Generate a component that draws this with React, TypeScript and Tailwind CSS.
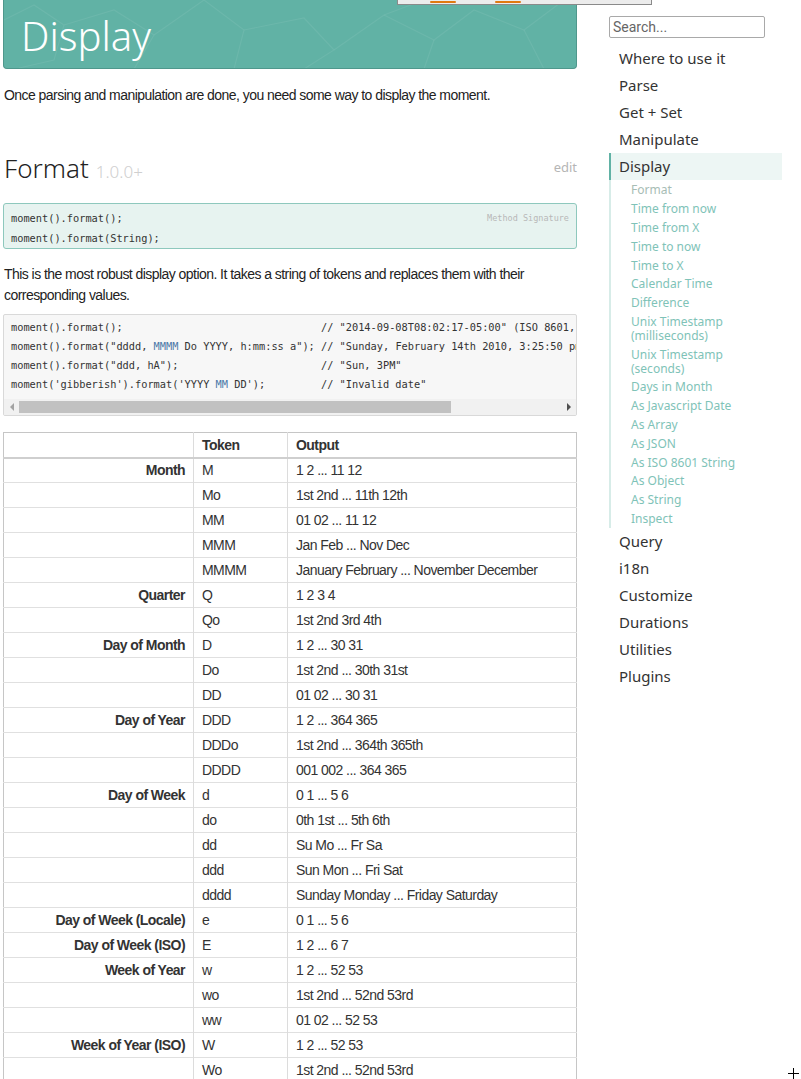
import React from "react";

const heading = { fontFamily: '"Noto Sans", "DejaVu Sans", sans-serif' };
const body = { fontFamily: '"Liberation Sans", Arial, sans-serif', letterSpacing: "-0.55px" };
const search = { fontFamily: 'Roboto, "Liberation Sans", Arial, sans-serif' };
const mono = { fontFamily: '"DejaVu Sans Mono", "Liberation Mono", monospace' };

type Row = [string, string, string];
const rows: Row[] = [
  ["Month", "M", "1 2 ... 11 12"],
  ["", "Mo", "1st 2nd ... 11th 12th"],
  ["", "MM", "01 02 ... 11 12"],
  ["", "MMM", "Jan Feb ... Nov Dec"],
  ["", "MMMM", "January February ... November December"],
  ["Quarter", "Q", "1 2 3 4"],
  ["", "Qo", "1st 2nd 3rd 4th"],
  ["Day of Month", "D", "1 2 ... 30 31"],
  ["", "Do", "1st 2nd ... 30th 31st"],
  ["", "DD", "01 02 ... 30 31"],
  ["Day of Year", "DDD", "1 2 ... 364 365"],
  ["", "DDDo", "1st 2nd ... 364th 365th"],
  ["", "DDDD", "001 002 ... 364 365"],
  ["Day of Week", "d", "0 1 ... 5 6"],
  ["", "do", "0th 1st ... 5th 6th"],
  ["", "dd", "Su Mo ... Fr Sa"],
  ["", "ddd", "Sun Mon ... Fri Sat"],
  ["", "dddd", "Sunday Monday ... Friday Saturday"],
  ["Day of Week (Locale)", "e", "0 1 ... 5 6"],
  ["Day of Week (ISO)", "E", "1 2 ... 6 7"],
  ["Week of Year", "w", "1 2 ... 52 53"],
  ["", "wo", "1st 2nd ... 52nd 53rd"],
  ["", "ww", "01 02 ... 52 53"],
  ["Week of Year (ISO)", "W", "1 2 ... 52 53"],
  ["", "Wo", "1st 2nd ... 52nd 53rd"],
  ["", "WW", "01 02 ... 52 53"],
  ["Year", "YY", "70 71 ... 29 30"],
];

const mainNav1 = ["Where to use it", "Parse", "Get + Set", "Manipulate"];
const subNav = [
  "Format",
  "Time from now",
  "Time from X",
  "Time to now",
  "Time to X",
  "Calendar Time",
  "Difference",
  "Unix Timestamp (milliseconds)",
  "Unix Timestamp (seconds)",
  "Days in Month",
  "As Javascript Date",
  "As Array",
  "As JSON",
  "As ISO 8601 String",
  "As Object",
  "As String",
  "Inspect",
];
const mainNav2 = ["Query", "i18n", "Customize", "Durations", "Utilities", "Plugins"];

function Banner() {
  return (
    <div className="relative h-[69px] bg-[#61b2a5] border-x border-b border-[#4f978c] rounded-b-[4px] overflow-hidden">
      <svg className="absolute inset-0" width="574" height="69" viewBox="0 0 574 69">
        <g fill="none" stroke="#ffffff" strokeOpacity="0.07" strokeWidth="1.2">
          <polyline points="0,20 30,5 60,25 50,60 15,68" />
          <polyline points="60,25 110,10 150,35 130,69" />
          <polyline points="150,35 200,0 240,30 230,69" />
          <polyline points="240,30 300,18 330,50 300,69" />
          <polyline points="330,50 380,15 420,0" />
          <polyline points="380,15 430,40 470,10 520,30 560,0" />
          <polyline points="430,40 420,69" />
          <polyline points="520,30 540,69" />
        </g>
      </svg>
      <div className="absolute left-[17px] top-[12px] text-white text-[40px] leading-[48px] font-light" style={heading}>
        Display
      </div>
    </div>
  );
}

function Scrollbar() {
  return (
    <div className="h-[16px] bg-[#f1f1f1] flex items-center relative">
      <div className="w-[15px] h-[16px] flex items-center justify-center">
        <div className="w-0 h-0 border-y-[4px] border-y-transparent border-r-[4px] border-r-[#a3a3a3]" />
      </div>
      <div className="w-[432px] h-[12px] bg-[#c1c1c1]" />
      <div className="flex-1" />
      <div className="w-[15px] h-[16px] flex items-center justify-center">
        <div className="w-0 h-0 border-y-[4px] border-y-transparent border-l-[4px] border-l-[#505050]" />
      </div>
    </div>
  );
}

function CodeBlock() {
  const c = "text-[#333]";
  const b = "text-[#4d79a8]";
  return (
    <div className="mt-[8px] border border-[#d9d9d9] bg-[#f7f7f7] rounded-[2px] overflow-hidden">
      <div className="pt-[3px] pb-[5px] pl-[7px] overflow-hidden whitespace-pre text-[10.3px] leading-[19px] text-[#333]" style={mono}>
        <div className={c}>{'moment().format();                                // "2014-09-08T08:02:17-05:00" (ISO 8601, no fractional seconds)'}</div>
        <div className={c}>
          {'moment().format("dddd, '}
          <span className={b}>MMMM</span>
          {' Do YYYY, h:mm:ss a"); // "Sunday, February 14th 2010, 3:25:50 pm"'}
        </div>
        <div className={c}>{'moment().format("ddd, hA");                       // "Sun, 3PM"'}</div>
        <div className={c}>
          {"moment('gibberish').format('YYYY "}
          <span className={b}>MM</span>
          {" DD');         // \"Invalid date\""}
        </div>
      </div>
      <Scrollbar />
    </div>
  );
}

function TokenTable() {
  return (
    <table className="mt-[16px] w-full border-collapse border border-[#c6c6c6] text-[14px] text-[#333]" style={body}>
      <thead>
        <tr className="border-b-2 border-[#cfcfcf] h-[25px]">
          <th className="w-[190px] border-r border-[#dcdcdc] p-0"></th>
          <th className="w-[94px] border-r border-[#dcdcdc] text-left font-bold px-[8px] py-0 leading-[20px]">Token</th>
          <th className="text-left font-bold px-[8px] py-0 leading-[20px]">Output</th>
        </tr>
      </thead>
      <tbody>
        {rows.map((r, i) => (
          <tr key={i} className="border-b border-[#e0e0e0] h-[25px]">
            <td className="border-r border-[#dcdcdc] text-right font-bold px-[8px] py-0 leading-[20px]">{r[0]}</td>
            <td className="border-r border-[#dcdcdc] px-[8px] py-0 leading-[20px]">{r[1]}</td>
            <td className="px-[8px] py-0 leading-[20px]">{r[2]}</td>
          </tr>
        ))}
      </tbody>
    </table>
  );
}

function Main() {
  return (
    <div className="w-[574px] ml-[3px] shrink-0">
      <Banner />
      <p className="mt-[16px] text-[14px] leading-[20px] text-[#222] pl-[1px]" style={body}>
        Once parsing and manipulation are done, you need some way to display the moment.
      </p>
      <div className="mt-[45px] flex items-baseline pl-[1px] h-[36px]">
        <span className="text-[26px] leading-[36px] font-light text-[#222]" style={heading}>Format</span>
        <span className="ml-[7px] text-[17px] font-light text-[#cfcfcf]" style={heading}>1.0.0+</span>
        <span className="ml-auto self-center text-[13px] text-[#b5b5b5]" style={heading}>edit</span>
      </div>
      <div className="mt-[17px] border border-[#8ec8bd] bg-[#e7f3f0] rounded-[3px] pt-[4px] pb-0 pl-[7px] pr-[7px] relative">
        <div className="text-[10.3px] leading-[20px] text-[#333]" style={mono}>
          <div>moment().format();</div>
          <div>moment().format(String);</div>
        </div>
        <div className="absolute right-[7px] top-[8px] text-[8.5px] text-[#b8b8b8]" style={mono}>Method Signature</div>
      </div>
      <p className="mt-[15px] text-[14px] leading-[21px] text-[#222] pl-[1px]" style={body}>
        This is the most robust display option. It takes a string of tokens and replaces them with their corresponding values.
      </p>
      <CodeBlock />
      <TokenTable />
    </div>
  );
}

function Sidebar() {
  return (
    <div className="ml-[32px] w-[173px] shrink-0 pt-[16px]" style={heading}>
      <div className="w-[156px] h-[22px] border border-[#a9a9a9] rounded-[2px] flex items-center pl-[3px] text-[14px] text-[#666]" style={search}>
        Search...
      </div>
      <div className="mt-[7px]">
        {mainNav1.map((n) => (
          <div key={n} className="h-[27px] pl-[10px] flex items-center text-[15px] text-[#333]">{n}</div>
        ))}
        <div className="h-[27px] pl-[8px] flex items-center text-[15px] text-[#333] bg-[#edf6f4] border-l-2 border-[#61b2a5]">Display</div>
        <div className="border-l-2 border-[#d7ece8] pl-[20px] pt-[1px]">
          {subNav.map((s, i) => (
            <div
              key={s}
              className={
                "py-[2.4px] leading-[14px] text-[12px] pr-[16px] " +
                (i === 0 ? "text-[#a7bdb5]" : "text-[#7fc3b8]")
              }
            >
              {s}
            </div>
          ))}
        </div>
        <div className="-mt-[1px]">
          {mainNav2.map((n) => (
            <div key={n} className="h-[27px] pl-[10px] flex items-center text-[15px] text-[#333]">{n}</div>
          ))}
        </div>
      </div>
    </div>
  );
}

export default function App() {
  return (
    <div className="relative h-[1079px] w-[801px] overflow-hidden bg-white">
      <div className="flex items-start">
        <Main />
        <Sidebar />
      </div>
      <div className="absolute left-[397px] top-0 w-[255px] h-[5px] bg-[#ececec] border-x border-b border-[#8a8a8a]">
        <div className="absolute left-[32px] top-[1px] w-[26px] h-[2px] bg-[#e07a10] rounded-full" />
        <div className="absolute left-[97px] top-[1px] w-[26px] h-[2px] bg-[#e07a10] rounded-full" />
      </div>
      <div className="absolute left-[788px] top-[1073px] w-[11px] h-[1px] bg-black" />
      <div className="absolute left-[793px] top-[1068px] w-[1px] h-[11px] bg-black" />
    </div>
  );
}
